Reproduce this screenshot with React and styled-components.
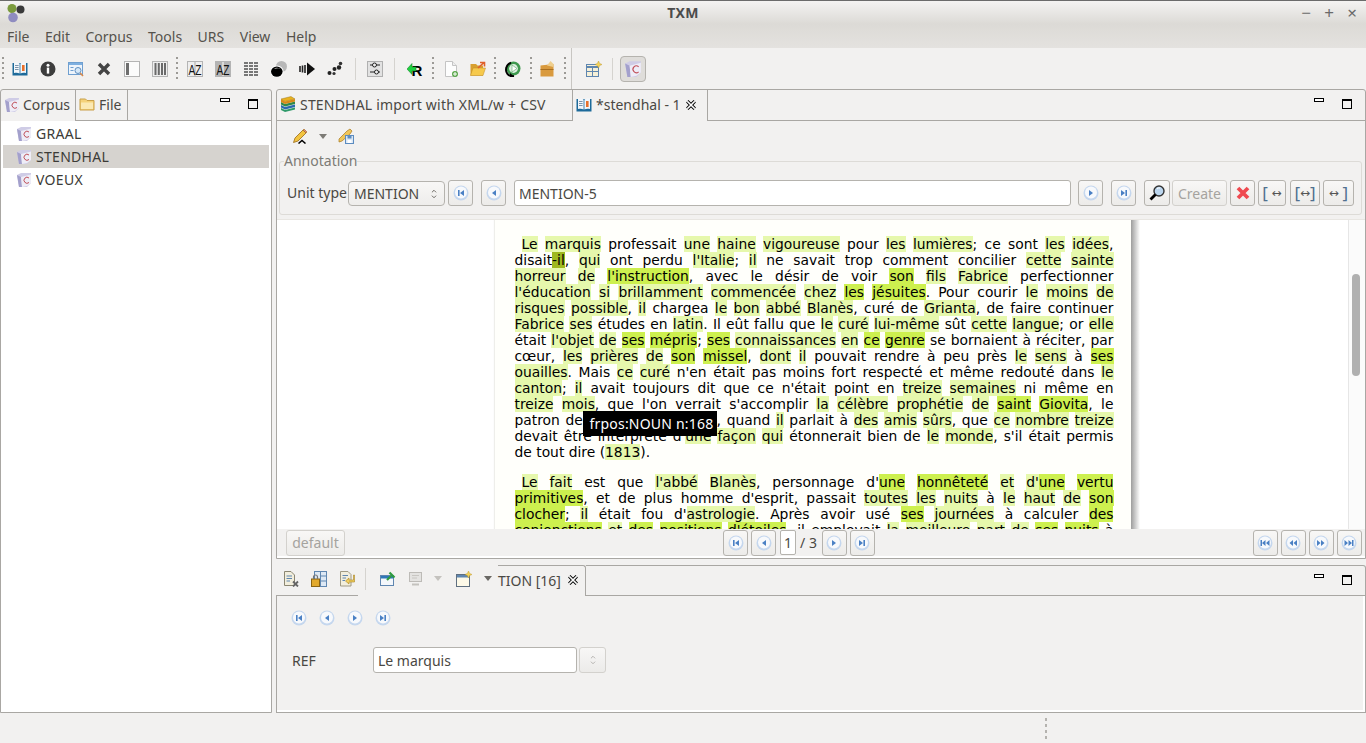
import React from "react"
import styled, { createGlobalStyle } from "styled-components"

const GlobalStyle = createGlobalStyle`
  html, body {
    margin: 0;
    padding: 0;
    background: #f2f1f0;
  }
  * {
    box-sizing: border-box;
  }
`

const uiFont = `"Noto Sans", "Open Sans", sans-serif`
const line = "#a9a7a3"

const Window = styled.div`
  width: 1366px;
  height: 743px;
  display: flex;
  flex-direction: column;
  overflow: hidden;
  background: #f2f1f0;
  color: #4a4843;
  font-family: ${uiFont};
  font-size: 14px;
`

/* title + menu */
const TitleBar = styled.div`
  height: 24px;
  flex: none;
  display: grid;
  grid-template-columns: 1fr auto 1fr;
  align-items: center;
  padding: 0 6px;
  border-top: 1px solid #6b6b6b;
  background: linear-gradient(#f4f3f2, #dcdad6);
`
const Title = styled.div`
  font-weight: 700;
  font-size: 14px;
  letter-spacing: 0.3px;
  color: #4c4c4c;
`
const WinControls = styled.div`
  display: flex;
  justify-content: flex-end;
  gap: 7px;
  color: #6a6a6a;
  font-size: 17px;
  line-height: 20px;
  span {
    width: 16px;
    text-align: center;
  }
`
const MenuBar = styled.div`
  height: 24px;
  flex: none;
  display: flex;
  align-items: center;
  padding-left: 7px;
  gap: 15.5px;
  background: linear-gradient(#dcdad6, #e4e2df);
  color: #55524c;
`

/* main toolbar */
const Toolbar = styled.div`
  height: 41px;
  flex: none;
  display: flex;
  align-items: center;
  padding-left: 1px;
  background: #f2f1f0;
`
const ToolSlot = styled.div`
  width: 28px;
  height: 28px;
  flex: none;
  display: flex;
  align-items: center;
  justify-content: center;
  margin-left: ${p => p.$ml || 0}px;
`
const Grip = styled.div`
  width: 2px;
  height: 24px;
  flex: none;
  margin: 0 ${p => p.$mr ?? 2}px 0 ${p => p.$ml ?? 2}px;
  background: repeating-linear-gradient(#9c9a96 0 2px, transparent 2px 5px);
`
const ToolSep = styled.div`
  width: 1px;
  height: 22px;
  flex: none;
  margin: 0 ${p => p.$mr ?? 6}px 0 ${p => p.$ml ?? 6}px;
  background: #d5d3cf;
`
const TallRule = styled.div`
  width: 1px;
  height: 41px;
  flex: none;
  margin: 0 8px 0 2px;
  background: #c8c6c2;
`
const ToggleButton = styled.div`
  width: 26px;
  height: 26px;
  flex: none;
  display: flex;
  align-items: center;
  justify-content: center;
  border: 1px solid #b5b3ae;
  border-radius: 4px;
  background: #dfddda;
`

/* panels */
const Main = styled.div`
  flex: 1;
  min-height: 0;
  display: flex;
  gap: 4px;
`
const SidePanel = styled.div`
  width: 272px;
  flex: none;
  display: flex;
  flex-direction: column;
  border: 1px solid ${line};
  border-radius: 3px 3px 0 0;
`
const TabBar = styled.div`
  height: 31px;
  flex: none;
  display: flex;
`
const Tab = styled.div`
  display: flex;
  align-items: center;
  gap: ${p => p.$gap || 5}px;
  width: ${p => p.$w}px;
  padding: 0 0 2px ${p => p.$pl || 3}px;
  flex: none;
  color: #4a4843;
  letter-spacing: ${p => p.$track || 0}px;
  white-space: nowrap;
  border-right: 1px solid ${line};
  border-bottom: ${p => (p.$active ? "none" : `1px solid ${line}`)};
`
const TabFill = styled.div`
  flex: 1;
  display: flex;
  justify-content: flex-end;
  gap: 18px;
  padding: 8px 13px 0 0;
  border-bottom: 1px solid ${line};
`
const MinBtn = styled.div`
  width: 10px;
  height: 4px;
  border: 1px solid #000;
  background: #fff;
`
const MaxBtn = styled.div`
  width: 10px;
  height: 10px;
  margin-top: 1px;
  border: 1px solid #000;
  border-top-width: 2px;
  background: #f2f1f0;
`
const TreeList = styled.div`
  flex: 1;
  background: #fff;
  padding: 1px 2px;
`
const TreeRow = styled.div`
  height: 23px;
  display: flex;
  align-items: center;
  gap: 4px;
  padding-left: 13px;
  letter-spacing: 0.3px;
  background: ${p => (p.$selected ? "#d6d3cf" : "transparent")};
  color: #3c3b37;
`

const RightColumn = styled.div`
  flex: 1;
  min-width: 0;
  display: flex;
  flex-direction: column;
  gap: 6px;
`
const EditorPanel = styled.div`
  height: 470px;
  flex: none;
  display: flex;
  flex-direction: column;
  border: 1px solid ${line};
  border-radius: 3px 3px 0 0;
`
const EditorTools = styled.div`
  height: 32px;
  flex: none;
  display: flex;
  align-items: center;
  padding: 0 0 2px 15px;
  gap: 11px;
`
const Group = styled.fieldset`
  margin: 0 3px 0 2px;
  padding: 11px 7px 0 7px;
  height: 62px;
  flex: none;
  border: 1px solid #dddbd7;
  border-radius: 3px;
  display: flex;
  align-items: flex-start;
  legend {
    padding: 0;
    margin-left: -3px;
    color: #7d7b76;
    font-size: 14px;
    line-height: 16px;
  }
`
const FieldLabel = styled.span`
  width: 61px;
  height: 26px;
  line-height: 25px;
  flex: none;
  white-space: nowrap;
`
const SelectBox = styled.div`
  width: 97px;
  height: 25px;
  flex: none;
  display: flex;
  align-items: center;
  justify-content: space-between;
  margin-top: 1px;
  padding: 0 5px;
  border: 1px solid #b5b3ae;
  border-radius: 4px;
  background: linear-gradient(#f8f7f6, #eeedeb);
`
const TextBox = styled.div`
  flex: ${p => (p.$w ? "none" : 1)};
  width: ${p => (p.$w ? `${p.$w}px` : "auto")};
  height: 26px;
  display: flex;
  align-items: center;
  padding-left: 4px;
  margin-left: ${p => p.$ml || 0}px;
  border: 1px solid #b5b3ae;
  border-radius: 3px;
  background: #fff;
`
const Btn = styled.div`
  width: ${p => p.$w || 25}px;
  height: 26px;
  flex: none;
  display: flex;
  align-items: center;
  justify-content: center;
  margin-left: ${p => p.$ml || 0}px;
  border: 1px solid ${p => (p.$off ? "#d3d1cd" : "#b5b3ae")};
  border-radius: 3px;
  background: linear-gradient(#f8f7f6, #ecebe9);
  color: ${p => (p.$off ? "#a5a39f" : "#4a4843")};
  font-size: 14px;
  white-space: nowrap;
`
const Bracket = styled.span`
  color: #50708f;
  font-size: 17px;
  line-height: 20px;
`
const Arrow = styled.span`
  font-family: "DejaVu Sans", sans-serif;
  font-size: 12px;
  color: #555;
`

/* document view */
const DocArea = styled.div`
  height: 310px;
  flex: none;
  margin-top: 4px;
  display: flex;
  background: #fff;
  border-top: 1px solid #e8e6e2;
  overflow: hidden;
`
const DocScroll = styled.div`
  flex: 1;
  display: flex;
  justify-content: center;
`
const Page = styled.div`
  width: 636px;
  padding: 16px 17px 0 20px;
  background: #fffffb;
  position: relative;
  box-shadow: -1px 0 1px #eeeeea;
  color: #000;
  font-family: "DejaVu Sans", sans-serif;
  font-size: 13.85px;
  line-height: 16px;
  &::after {
    content: "";
    position: absolute;
    top: 0;
    bottom: 0;
    left: 100%;
    width: 9px;
    background: linear-gradient(90deg, #9d9d9d, #fff);
  }
`
const Para = styled.div`
  margin-bottom: 14px;
`
const TextLine = styled.div`
  text-align: justify;
  text-align-last: ${p => (p.$last ? "left" : "justify")};
  text-indent: ${p => (p.$first ? "7px" : "0")};
`
const toneColors = {
  light: "#e6f8ac",
  strong: "#cdf04f",
  dark: "#9fb91f",
}
const Mark = styled.span`
  background: ${p => toneColors[p.$tone]};
`
const TipGap = styled.span`
  display: inline-block;
  width: 128px;
`
const Tooltip = styled.div`
  position: absolute;
  left: 88px;
  top: 191px;
  width: 134px;
  height: 25px;
  background: #000;
  color: #fff;
  font-family: ${uiFont};
  font-size: 14px;
  letter-spacing: 0.2px;
  line-height: 25px;
  padding-left: 7px;
  white-space: nowrap;
`
const ScrollTrack = styled.div`
  width: 17px;
  flex: none;
  background: #fbfbfb;
  border-left: 1px solid #e6e6e6;
  padding: 54px 5px 0 3px;
`
const ScrollThumb = styled.div`
  height: 102px;
  border-radius: 5px;
  background: #b0b0b0;
`
const DocFooter = styled.div`
  flex: 1;
  display: flex;
  align-items: center;
  justify-content: space-between;
  padding: 0 3px 2px 9px;
  box-shadow: inset 0 -2px 0 #fff;
`
const NavGroup = styled.div`
  display: flex;
  align-items: center;
  gap: 3px;
`
const PageBox = styled.div`
  width: 16px;
  height: 25px;
  border: 1px solid #b5b3ae;
  border-radius: 2px;
  background: #fff;
  text-align: center;
  line-height: 23px;
  margin-left: 1px;
`
const PageTotal = styled.span`
  margin: 0 2px 0 1px;
  white-space: nowrap;
`

/* detail panel */
const DetailPanel = styled.div`
  flex: 1;
  min-height: 0;
  display: flex;
  flex-direction: column;
`
const DetailHead = styled.div`
  height: 31px;
  flex: none;
  display: flex;
`
const DetailTools = styled.div`
  width: 222px;
  flex: none;
  display: flex;
  align-items: center;
  padding: 0 0 4px 1px;
  position: relative;
  &::after {
    content: "";
    position: absolute;
    left: 0;
    bottom: 0;
    width: 82px;
    height: 1px;
    background: ${line};
  }
`
const DetailSlot = styled.div`
  width: 28px;
  flex: none;
  display: flex;
  justify-content: center;
  margin-left: ${p => p.$ml || 0}px;
`
const Caret = styled.div`
  width: 0;
  height: 0;
  flex: none;
  margin-left: ${p => p.$ml || 0}px;
  border-left: 4px solid transparent;
  border-right: 4px solid transparent;
  border-top: 5px solid ${p => p.$color || "#7d7b76"};
`
const DetailTab = styled.div`
  width: 88px;
  flex: none;
  display: flex;
  align-items: center;
  gap: 6px;
  padding-bottom: 2px;
  border-top: 1px solid ${line};
  border-right: 1px solid ${line};
  border-radius: 0 3px 0 0;
  white-space: nowrap;
`
const DetailFill = styled(TabFill)`
  border-top: 1px solid ${line};
  border-right: 1px solid ${line};
  border-radius: 0 3px 0 0;
`
const DetailBody = styled.div`
  flex: 1;
  border: 1px solid ${line};
  border-top: none;
  box-shadow: inset -2px -2px 0 #fff;
  padding: 14px 15px 0 14px;
`
const RoundNav = styled.div`
  display: flex;
  gap: 12px;
  height: 16px;
`
const FormRow = styled.div`
  margin-top: 21px;
  display: flex;
  align-items: center;
`
const RefLabel = styled.span`
  width: 82px;
  flex: none;
  padding-left: 1px;
`
const StatusBar = styled.div`
  height: 30px;
  flex: none;
  padding: 5px 0 0 1045px;
`
const StatusGrip = styled.div`
  width: 2px;
  height: 23px;
  background: repeating-linear-gradient(#b5b3af 0 3px, transparent 3px 6px);
`

/* icons */
const Svg = styled.svg`
  width: ${p => p.$size || 16}px;
  height: ${p => p.$size || 16}px;
  flex: none;
  display: block;
`
const Ico = ({ size, children }) => (
  <Svg $size={size} viewBox="0 0 16 16">
    {children}
  </Svg>
)

const CorpusIcon = ({ size }) => (
  <Ico size={size}>
    <path d="M1 3 L5 1 L15 1 L15 11 L11 15 L3 15 Z" fill="#cfcce6" />
    <path d="M1 3 L5 5 L6 15 L3 15 Z" fill="#a3a0cc" />
    <path d="M5 5 L15 2.5 L15 11 L11 14 L6 15 Z" fill="#eeedf7" />
    <path d="M13 6 A3 3 0 1 0 13 10.5" fill="none" stroke="#c0505a" strokeWidth="1" />
  </Ico>
)
const BookIcon = () => (
  <Ico>
    <path d="M0.5 2 H15.5 V14.5 H0.5 Z" fill="#1d6a9a" />
    <path d="M2 1.5 C4 1 6 1.5 7.6 2.5 V12.5 C6 11.5 4 11.5 2 12 Z" fill="#f2f6fa" />
    <path d="M14 1.5 C12 1 10 1.5 8.4 2.5 V12.5 C10 11.5 12 11.5 14 12 Z" fill="#f2f6fa" />
    <path d="M3 4.5 H6.6 M3 6.5 H6.6 M3 8.5 H6.6" stroke="#7a93aa" />
    <path d="M10 4 H12.6 V10 H10 Z" fill="#e8702a" />
  </Ico>
)
const InfoIcon = () => (
  <Ico>
    <circle cx="8" cy="8" r="7.5" fill="#3d3d3d" />
    <circle cx="8" cy="4.2" r="1.5" fill="#fff" />
    <rect x="6.8" y="6.6" width="2.4" height="6" fill="#fff" />
  </Ico>
)
const EditionSearchIcon = () => (
  <Ico>
    <rect x="0.5" y="1.5" width="14" height="12" fill="#eef4fb" stroke="#6f9fd0" />
    <rect x="1" y="2" width="13" height="2" fill="#7fb0e0" />
    <rect x="2.5" y="6" width="3" height="1" fill="#6f9fd0" />
    <rect x="2.5" y="9" width="3" height="1" fill="#6f9fd0" />
    <circle cx="10" cy="9.5" r="3" fill="#d6e8f8" stroke="#5f8fc0" />
    <path d="M12.2 12 L15 15" stroke="#d8884a" strokeWidth="1.6" />
  </Ico>
)
const CrossIcon = () => (
  <Ico>
    <path d="M3 3 L13 13 M13 3 L3 13" stroke="#444" strokeWidth="3.4" />
  </Ico>
)
const FirstColumnIcon = () => (
  <Ico>
    <rect x="0.5" y="0.5" width="15" height="15" fill="#fbfbfb" stroke="#b4b4b4" />
    <rect x="2" y="2" width="3" height="12" fill="#6e6e6e" />
  </Ico>
)
const BarsIcon = () => (
  <Ico>
    <rect x="0.5" y="0.5" width="15" height="15" fill="#eee" stroke="#b4b4b4" />
    <path d="M3.5 2 V14 M6.8 2 V14 M10 2 V14 M13 2 V14" stroke="#6a6a6a" strokeWidth="2" />
  </Ico>
)
const AzIcon = ({ dark }) => (
  <Ico>
    <rect x="0.5" y="0.5" width="15" height="15" fill={dark ? "#b4b4b4" : "#eee"} stroke="#b4b4b4" />
    <path d="M8 1 V15" stroke={dark ? "#fff" : "#aaa"} />
    <text
      x="1.5"
      y="13.5"
      fontFamily="Liberation Sans"
      fontSize="14"
      textLength="13"
      lengthAdjust="spacingAndGlyphs"
      fill="#111"
    >
      AZ
    </text>
  </Ico>
)
const GridIcon = () => (
  <Ico>
    {[1, 4, 7, 10, 13].map(y =>
      [1, 6, 11].map(x => <rect key={`${x}-${y}`} x={x} y={y} width="4" height="2" fill="#777" />)
    )}
  </Ico>
)
const BlobsIcon = () => (
  <Ico>
    <circle cx="10.5" cy="5.5" r="5.5" fill="#b8b8b8" />
    <ellipse cx="6" cy="10.5" rx="6.6" ry="6" fill="#fff" />
    <ellipse cx="5.8" cy="10.6" rx="5.8" ry="5.2" fill="#000" />
    <path d="M3 8 C6 6.5 9 7 11 9 C8 6.5 5 6 3 8 Z" fill="#fff" />
  </Ico>
)
const ProgressIcon = () => (
  <Ico>
    <path d="M1 5 V11 M3.5 4.5 V11.5 M6 4 V12" stroke="#222" strokeWidth="1.6" />
    <path d="M8 1.5 L16 8 L8 14.5 Z" fill="#111" />
  </Ico>
)
const DotsIcon = () => (
  <Ico>
    <circle cx="2.5" cy="12" r="2" fill="#222" />
    <circle cx="7" cy="12.5" r="1.6" fill="#333" />
    <circle cx="7.5" cy="8" r="2" fill="#222" />
    <circle cx="12" cy="6.5" r="2.2" fill="#222" />
    <circle cx="13.5" cy="2.5" r="1.8" fill="#333" />
  </Ico>
)
const ConcordIcon = () => (
  <Ico>
    <rect x="0.5" y="0.5" width="15" height="15" fill="#e2e2e2" stroke="#b0b0b0" />
    <path d="M3 4 H6 M9 4 H13 M3 11 H8 M11 11 H13" stroke="#222" />
    <circle cx="7.5" cy="4" r="2" fill="#eee" stroke="#222" />
    <circle cx="9.5" cy="11" r="2" fill="#eee" stroke="#222" />
  </Ico>
)
const RIcon = () => (
  <Ico>
    <text x="4.5" y="14.5" fontFamily="Liberation Sans" fontWeight="700" fontSize="15" fill="#000">
      R
    </text>
    <path d="M0 8 L5 2.5 V6 H9 V10 H5 V13.5 Z" fill="#1fd040" stroke="#0c7a20" strokeWidth="0.5" />
  </Ico>
)
const NewFileIcon = () => (
  <Ico>
    <path d="M2.5 0.5 H9.5 L13.5 4.5 V15.5 H2.5 Z" fill="#fdfdfd" stroke="#c4c4c4" />
    <path d="M9.5 0.5 V4.5 H13.5" fill="#eee" stroke="#c4c4c4" />
    <circle cx="12" cy="13" r="3" fill="#5aa84a" />
    <path d="M12 11 V15 M10 13 H14" stroke="#fff" />
  </Ico>
)
const OpenFolderIcon = () => (
  <Ico>
    <path d="M0.5 3 H6 L7.5 4.5 H13 V14.5 H0.5 Z" fill="#d8a030" />
    <path d="M3 7 H15.5 L13 14.5 H0.5 Z" fill="#f6c94c" stroke="#c08a20" strokeWidth="0.5" />
    <path d="M8 7 L14 1.5 M10 1.5 H14.5 V5.5" stroke="#e0602a" strokeWidth="1.6" fill="none" />
  </Ico>
)
const CycleIcon = () => (
  <Ico>
    <circle cx="8.5" cy="7.5" r="7" fill="#3f9a4f" />
    <circle cx="8.5" cy="7.5" r="4.4" fill="#dcefe0" />
    <path d="M7 4 L12 7.5 L7 11 Z" fill="#fff" stroke="#3f9a4f" strokeWidth="0.5" />
    <path d="M9 15 C3 16 0 11 1.4 6.6 C2 4 4 2.5 6 1.6" fill="none" stroke="#000" strokeWidth="2" />
    <path d="M5 12 L9 15.5 L5 16 Z" fill="#000" />
  </Ico>
)
const PackageIcon = () => (
  <Ico>
    <path d="M1.5 4.5 L14.5 3 V15.5 H1.5 Z" fill="#d99a3e" />
    <path d="M8 4.5 L11.5 0 L14.5 3 V6 Z" fill="#efcf8e" />
    <rect x="1.5" y="8" width="13" height="1" fill="#a96f20" />
  </Ico>
)
const TableStarIcon = () => (
  <Ico>
    <rect x="0.5" y="3.5" width="12" height="12" fill="#f6f0d8" stroke="#5f86b0" />
    <path d="M0.5 6 H12.5" stroke="#5f86b0" strokeWidth="2" />
    <path d="M6.5 6 V15 M1 10.5 H12" stroke="#5f86b0" />
    <path d="M12.5 0 L13.6 2.4 L16 3.5 L13.6 4.6 L12.5 7 L11.4 4.6 L9 3.5 L11.4 2.4 Z" fill="#f3d257" stroke="#b89020" strokeWidth="0.4" />
  </Ico>
)
const FolderIcon = () => (
  <Ico>
    <path d="M1 3 H6.5 L8 4.5 H15 V14 H1 Z" fill="#f5d27a" stroke="#c9a04a" />
    <rect x="2" y="6.5" width="12" height="6.5" fill="#fbe9b4" />
  </Ico>
)
const BooksIcon = () => (
  <Ico>
    <path d="M1 3 L11 0.5 L15 3 L5 5.5 Z" fill="#e8b220" stroke="#8a6a10" strokeWidth="0.4" />
    <path d="M1 6 L5 8 L15 5.5 V8 L5 10.5 L1 8.5 Z" fill="#2f8a4a" />
    <path d="M1 9 L5 11 L15 8.5 V11 L5 13.5 L1 11.5 Z" fill="#2a6ab0" />
    <path d="M1 12 L5 14 L15 11.5 V13.5 L5 16 L1 14 Z" fill="#2f9a6a" />
    <path d="M1 3 L5 5.5 L15 3 V5.5 L5 8 L1 6 Z" fill="#d88a18" />
  </Ico>
)
const CloseGlyph = () => (
  <Ico size={12}>
    <path d="M3 3 L13 13 M13 3 L3 13" stroke="#000" strokeWidth="4.4" />
    <path d="M3 3 L13 13 M13 3 L3 13" stroke="#fff" strokeWidth="2.2" />
  </Ico>
)
const PencilIcon = () => (
  <Ico>
    <path d="M3 10 L11 2 L14 5 L6 13 L1.5 14.5 Z" fill="#f2c440" stroke="#9a6a18" strokeWidth="0.8" />
    <path d="M11 2 L14 5 L15 4 L12 1 Z" fill="#e88a80" stroke="#9a6a18" strokeWidth="0.6" />
    <path d="M6.5 15.5 L10 12.5 L13.5 15.5" stroke="#000" strokeWidth="1.5" fill="none" />
  </Ico>
)
const SavePencilIcon = () => (
  <Ico>
    <path d="M1 11 L9 3 L12 1 L14 3 L12 6 L4 13 L1 14 Z" fill="#f0c65a" stroke="#a87820" strokeWidth="0.7" />
    <rect x="7.5" y="7.5" width="8" height="8" fill="#dbe7f4" stroke="#5c8cc0" />
    <rect x="9.5" y="7.5" width="4" height="3" fill="#5c8cc0" />
    <rect x="9.5" y="12" width="4" height="3" fill="#fff" />
  </Ico>
)
const SearchIcon = () => (
  <Ico>
    <circle cx="10" cy="6" r="5" fill="#bcd6ee" stroke="#333" strokeWidth="1.4" />
    <path d="M6.5 9.5 L1.5 14.5" stroke="#000" strokeWidth="2.8" />
    <path d="M8 4 A3 3 0 0 1 11 3" stroke="#fff" fill="none" />
  </Ico>
)
const RedCrossIcon = () => (
  <Ico>
    <path d="M3 3 L13 13 M13 3 L3 13" stroke="#ef4a50" strokeWidth="3.8" />
  </Ico>
)
const DocCrossIcon = () => (
  <Ico>
    <path d="M1.5 0.5 H8 L11.5 4 V14.5 H1.5 Z" fill="#f2eedd" stroke="#8b8672" />
    <path d="M3.5 5 H9 M3.5 7.5 H9 M3.5 10 H7" stroke="#5f86b0" />
    <path d="M10 10.5 L15 15.5 M15 10.5 L10 15.5" stroke="#666" strokeWidth="1.8" />
  </Ico>
)
const LockTableIcon = () => (
  <Ico>
    <rect x="3.5" y="0.5" width="12" height="15" fill="#dde8f4" stroke="#5f86b0" />
    <path d="M9.5 1 V15 M10 5 H15 M10 10 H15" stroke="#5f86b0" />
    <rect x="0.5" y="8" width="8" height="7.5" fill="#e2a92c" stroke="#8a6414" />
    <path d="M2.5 8 V6 A2 2 0 0 1 6.5 6 V8" fill="none" stroke="#777" strokeWidth="1.2" />
  </Ico>
)
const DocArrowIcon = () => (
  <Ico>
    <path d="M1.5 0.5 H9 L12 3.5 V15 H1.5 Z" fill="#f2eedd" stroke="#a09a84" />
    <path d="M3.5 4.5 H9 M3.5 7 H7 M3.5 9.5 H6" stroke="#5f86b0" />
    <path d="M14.5 4 V9 H10 V7 L6.5 10 L10 13 V11 H15.5 V4 Z" fill="#f0cf60" stroke="#a98320" strokeWidth="0.6" />
  </Ico>
)
const PinWindowIcon = () => (
  <Ico>
    <rect x="0.5" y="4.5" width="13" height="10" fill="#f4f7fb" stroke="#5f86b0" />
    <rect x="1" y="5" width="12" height="2.5" fill="#2f78b8" />
    <path d="M7 9 L11 5 M9.5 1.5 L14.5 6.5" stroke="#2e9a3e" strokeWidth="2.2" />
  </Ico>
)
const MonitorIcon = () => (
  <Ico>
    <rect x="1.5" y="1.5" width="12" height="9" fill="#e4e3e1" stroke="#bdbbb7" />
    <path d="M4 4.5 H11 M4 7 H9" stroke="#c8c6c2" />
    <path d="M4 13.5 H11" stroke="#c4c2be" strokeWidth="2" />
  </Ico>
)
const WindowStarIcon = () => (
  <Ico>
    <rect x="0.5" y="3.5" width="13" height="12" fill="#fdf9e8" stroke="#5f6f80" />
    <rect x="1" y="4" width="12" height="2.5" fill="#5f86b0" />
    <path d="M12.5 0 L13.6 2.4 L16 3.5 L13.6 4.6 L12.5 7 L11.4 4.6 L9 3.5 L11.4 2.4 Z" fill="#f3d257" stroke="#b89020" strokeWidth="0.4" />
  </Ico>
)
const AppLogo = () => (
  <Svg $size={20} viewBox="0 0 20 20">
    <circle cx="6" cy="5.5" r="4.5" fill="#7a9a3c" />
    <circle cx="14.5" cy="6.5" r="4" fill="#3a3a3a" />
    <circle cx="7" cy="14.5" r="4.8" fill="#8f8cc0" />
  </Svg>
)

const navGlyphs = {
  first: "M5 5 H6.6 V11 H5 Z M11 5 V11 L7 8 Z",
  prev: "M10 5 V11 L6 8 Z",
  next: "M6 5 V11 L10 8 Z",
  last: "M11 5 H9.4 V11 H11 Z M5 5 V11 L9 8 Z",
  rew0: "M3.5 5 H5 V11 H3.5 Z M8.5 5 V11 L5 8 Z M12.5 5 V11 L9 8 Z",
  rew: "M8 5 V11 L4.5 8 Z M12 5 V11 L8.5 8 Z",
  fwd: "M4 5 V11 L7.5 8 Z M8 5 V11 L11.5 8 Z",
  fwd0: "M3.5 5 V11 L7 8 Z M7.5 5 V11 L11 8 Z M11 5 H12.5 V11 H11 Z",
}
const NavIcon = ({ kind }) => (
  <Ico>
    <circle cx="8" cy="8" r="7.5" fill="#c5d7ee" />
    <circle cx="8" cy="7.6" r="6" fill="#f7f9fc" />
    <path d={navGlyphs[kind]} fill="#4a80c4" />
  </Ico>
)
const NavBtn = ({ kind, ml }) => (
  <Btn $ml={ml}>
    <NavIcon kind={kind} />
  </Btn>
)

const SpinArrows = ({ color = "#55524c" }) => (
  <Svg $size={10} viewBox="0 0 10 12">
    <path d="M2.5 4 L5 1.5 L7.5 4" fill="none" stroke={color} />
    <path d="M2.5 8 L5 10.5 L7.5 8" fill="none" stroke={color} />
  </Svg>
)

/* text of the page: [..] light, {..} strong, <..> current word */
const firstPara = [
  "[Le] [marquis] professait [une] [haine] [vigoureuse] pour [les] [lumières]; ce sont [les] [idées],",
  "disait<-il>, [qui] ont perdu [l'Italie]; [il] ne savait trop comment concilier [cette] [sainte]",
  "[horreur] [de] {l'instruction}, avec le désir de voir {son} [fils] [Fabrice] perfectionner",
  "[l'éducation] [si] [brillamment] [commencée] [chez] {les} {jésuites}. Pour courir [le] [moins] [de]",
  "[risques] [possible], [il] chargea [le] [bon] [abbé] [Blanès], curé de [Grianta], de faire continuer",
  "[Fabrice] [ses] études en [latin]. Il eût fallu que [le] [curé] [lui-même] sût [cette] [langue]; or [elle]",
  "était [l'objet] [de] {ses} {mépris}; {ses} [connaissances] [en] {ce} {genre} se bornaient à réciter, par",
  "cœur, [les] [prières] [de] {son} {missel}, [dont] [il] pouvait rendre à peu près [le] [sens] à {ses}",
  "[ouailles]. Mais [ce] [curé] n'en était pas moins fort respecté et même redouté dans [le]",
  "[canton]; [il] avait toujours dit que ce n'était point en [treize] [semaines] ni même en",
  "[treize] [mois], que l'on verrait s'accomplir [la] [célèbre] [prophétie] [de] {saint} {Giovita}, le",
  "patron de @, quand [il] parlait à [des] [amis] [sûrs], que [ce] [nombre] [treize]",
  "devait être interprété d'[une] [façon] [qui] étonnerait bien de [le] [monde], s'il était permis",
  "de tout dire ([1813]).",
]
const secondPara = [
  "[Le] [fait] est que [l'abbé] [Blanès], personnage d'{une} {honnêteté} [et] [d']{une} {vertu}",
  "{primitives}, et de plus homme d'esprit, passait [toutes] [les] [nuits] à [le] [haut] [de] {son}",
  "{clocher}; [il] était fou d'[astrologie]. Après avoir usé {ses} [journées] à calculer {des}",
  "{conjonctions} [et] {des} {positions} {d'étoiles}, il employait [la] [meilleure] [part] [de] {ses} {nuits} à",
]

const renderMarked = text =>
  text.split(/(\[[^\]]*\]|\{[^}]*\}|<[^>]*>|@)/).map((part, i) => {
    if (part === "@") return <TipGap key={i} />
    const inner = part.slice(1, -1)
    if (part[0] === "[") return <Mark key={i} $tone="light">{inner}</Mark>
    if (part[0] === "{") return <Mark key={i} $tone="strong">{inner}</Mark>
    if (part[0] === "<") return <Mark key={i} $tone="dark">{inner}</Mark>
    return part
  })

const Paragraph = ({ lines, closed }) => (
  <Para>
    {lines.map((text, i) => (
      <TextLine key={i} $first={i === 0} $last={closed && i === lines.length - 1}>
        {renderMarked(text)}
      </TextLine>
    ))}
  </Para>
)

const menus = ["File", "Edit", "Corpus", "Tools", "URS", "View", "Help"]
const corpora = ["GRAAL", "STENDHAL", "VOEUX"]

export default function App() {
  return (
    <Window>
      <GlobalStyle />
      <TitleBar>
        <AppLogo />
        <Title>TXM</Title>
        <WinControls>
          <span>−</span>
          <span>+</span>
          <span>×</span>
        </WinControls>
      </TitleBar>
      <MenuBar>
        {menus.map(m => (
          <span key={m}>{m}</span>
        ))}
      </MenuBar>
      <Toolbar>
        <Grip $ml={1} $mr={2} />
        <ToolSlot><BookIcon /></ToolSlot>
        <ToolSlot><InfoIcon /></ToolSlot>
        <ToolSlot><EditionSearchIcon /></ToolSlot>
        <ToolSlot><CrossIcon /></ToolSlot>
        <ToolSlot><FirstColumnIcon /></ToolSlot>
        <ToolSlot><BarsIcon /></ToolSlot>
        <Grip />
        <ToolSlot $ml={1}><AzIcon /></ToolSlot>
        <ToolSlot><AzIcon dark /></ToolSlot>
        <ToolSlot><GridIcon /></ToolSlot>
        <ToolSlot><BlobsIcon /></ToolSlot>
        <ToolSlot><ProgressIcon /></ToolSlot>
        <ToolSlot><DotsIcon /></ToolSlot>
        <ToolSep />
        <ToolSlot $ml={-1}><ConcordIcon /></ToolSlot>
        <ToolSep $ml={5} />
        <ToolSlot><RIcon /></ToolSlot>
        <Grip $ml={3} $mr={3} />
        <ToolSlot><NewFileIcon /></ToolSlot>
        <ToolSlot $ml={-1}><OpenFolderIcon /></ToolSlot>
        <Grip $ml={2} $mr={3} />
        <ToolSlot><CycleIcon /></ToolSlot>
        <Grip $ml={3} $mr={1} />
        <ToolSlot><PackageIcon /></ToolSlot>
        <Grip $ml={3} $mr={3} />
        <TallRule />
        <ToolSlot><TableStarIcon /></ToolSlot>
        <ToolSep $ml={4} $mr={7} />
        <ToggleButton><CorpusIcon size={18} /></ToggleButton>
      </Toolbar>
      <Main>
        <SidePanel>
          <TabBar>
            <Tab $active $w={75} $gap={3}><CorpusIcon />Corpus</Tab>
            <Tab $w={52} $gap={4}><FolderIcon />File</Tab>
            <TabFill>
              <MinBtn />
              <MaxBtn />
            </TabFill>
          </TabBar>
          <TreeList>
            {corpora.map(c => (
              <TreeRow key={c} $selected={c === "STENDHAL"}>
                <CorpusIcon />
                {c}
              </TreeRow>
            ))}
          </TreeList>
        </SidePanel>
        <RightColumn>
          <EditorPanel>
            <TabBar>
              <Tab $w={296} $gap={4} $track={0.2}><BooksIcon />STENDHAL import with XML/w + CSV</Tab>
              <Tab $active $w={135} $gap={4}><BookIcon />*stendhal - 1 <CloseGlyph /></Tab>
              <TabFill>
                <MinBtn />
                <MaxBtn />
              </TabFill>
            </TabBar>
            <EditorTools>
              <PencilIcon />
              <Caret />
              <SavePencilIcon />
            </EditorTools>
            <Group>
              <legend>Annotation</legend>
              <FieldLabel>Unit type</FieldLabel>
              <SelectBox>
                MENTION
                <SpinArrows />
              </SelectBox>
              <NavBtn kind="first" ml={3} />
              <NavBtn kind="prev" ml={8} />
              <TextBox $ml={8}>MENTION-5</TextBox>
              <NavBtn kind="next" ml={7} />
              <NavBtn kind="last" ml={8} />
              <Btn $ml={8} $w={26}><SearchIcon /></Btn>
              <Btn $ml={2} $w={55} $off>Create</Btn>
              <Btn $ml={3}><RedCrossIcon /></Btn>
              <Btn $ml={3} $w={28}><Bracket>[</Bracket>&nbsp;<Arrow>↔</Arrow></Btn>
              <Btn $ml={4} $w={30}><Bracket>[</Bracket><Arrow>↔</Arrow><Bracket>]</Bracket></Btn>
              <Btn $ml={3} $w={31}><Arrow>↔</Arrow>&nbsp;<Bracket>]</Bracket></Btn>
            </Group>
            <DocArea>
              <DocScroll>
                <Page>
                  <Paragraph lines={firstPara} closed />
                  <Paragraph lines={secondPara} />
                  <Tooltip>frpos:NOUN n:168</Tooltip>
                </Page>
              </DocScroll>
              <ScrollTrack>
                <ScrollThumb />
              </ScrollTrack>
            </DocArea>
            <DocFooter>
              <Btn $w={59} $off>default</Btn>
              <NavGroup>
                <NavBtn kind="first" />
                <NavBtn kind="prev" />
                <PageBox>1</PageBox>
                <PageTotal>/ 3</PageTotal>
                <NavBtn kind="next" />
                <NavBtn kind="last" />
              </NavGroup>
              <NavGroup>
                <NavBtn kind="rew0" />
                <NavBtn kind="rew" />
                <NavBtn kind="fwd" />
                <NavBtn kind="fwd0" />
              </NavGroup>
            </DocFooter>
          </EditorPanel>
          <DetailPanel>
            <DetailHead>
              <DetailTools>
                <DetailSlot><DocCrossIcon /></DetailSlot>
                <DetailSlot><LockTableIcon /></DetailSlot>
                <DetailSlot><DocArrowIcon /></DetailSlot>
                <ToolSep $ml={4} $mr={8} />
                <DetailSlot><PinWindowIcon /></DetailSlot>
                <DetailSlot><MonitorIcon /></DetailSlot>
                <Caret $color="#c4c2be" $ml={4} />
                <DetailSlot $ml={8}><WindowStarIcon /></DetailSlot>
                <Caret $color="#6a6864" $ml={6} />
              </DetailTools>
              <DetailTab>TION [16] <CloseGlyph /></DetailTab>
              <DetailFill>
                <MinBtn />
                <MaxBtn />
              </DetailFill>
            </DetailHead>
            <DetailBody>
              <RoundNav>
                <NavIcon kind="first" />
                <NavIcon kind="prev" />
                <NavIcon kind="next" />
                <NavIcon kind="last" />
              </RoundNav>
              <FormRow>
                <RefLabel>REF</RefLabel>
                <TextBox $w={204}>Le marquis</TextBox>
                <Btn $ml={2} $w={27} $off><SpinArrows color="#a9a7a3" /></Btn>
              </FormRow>
            </DetailBody>
          </DetailPanel>
        </RightColumn>
      </Main>
      <StatusBar>
        <StatusGrip />
      </StatusBar>
    </Window>
  )
}
